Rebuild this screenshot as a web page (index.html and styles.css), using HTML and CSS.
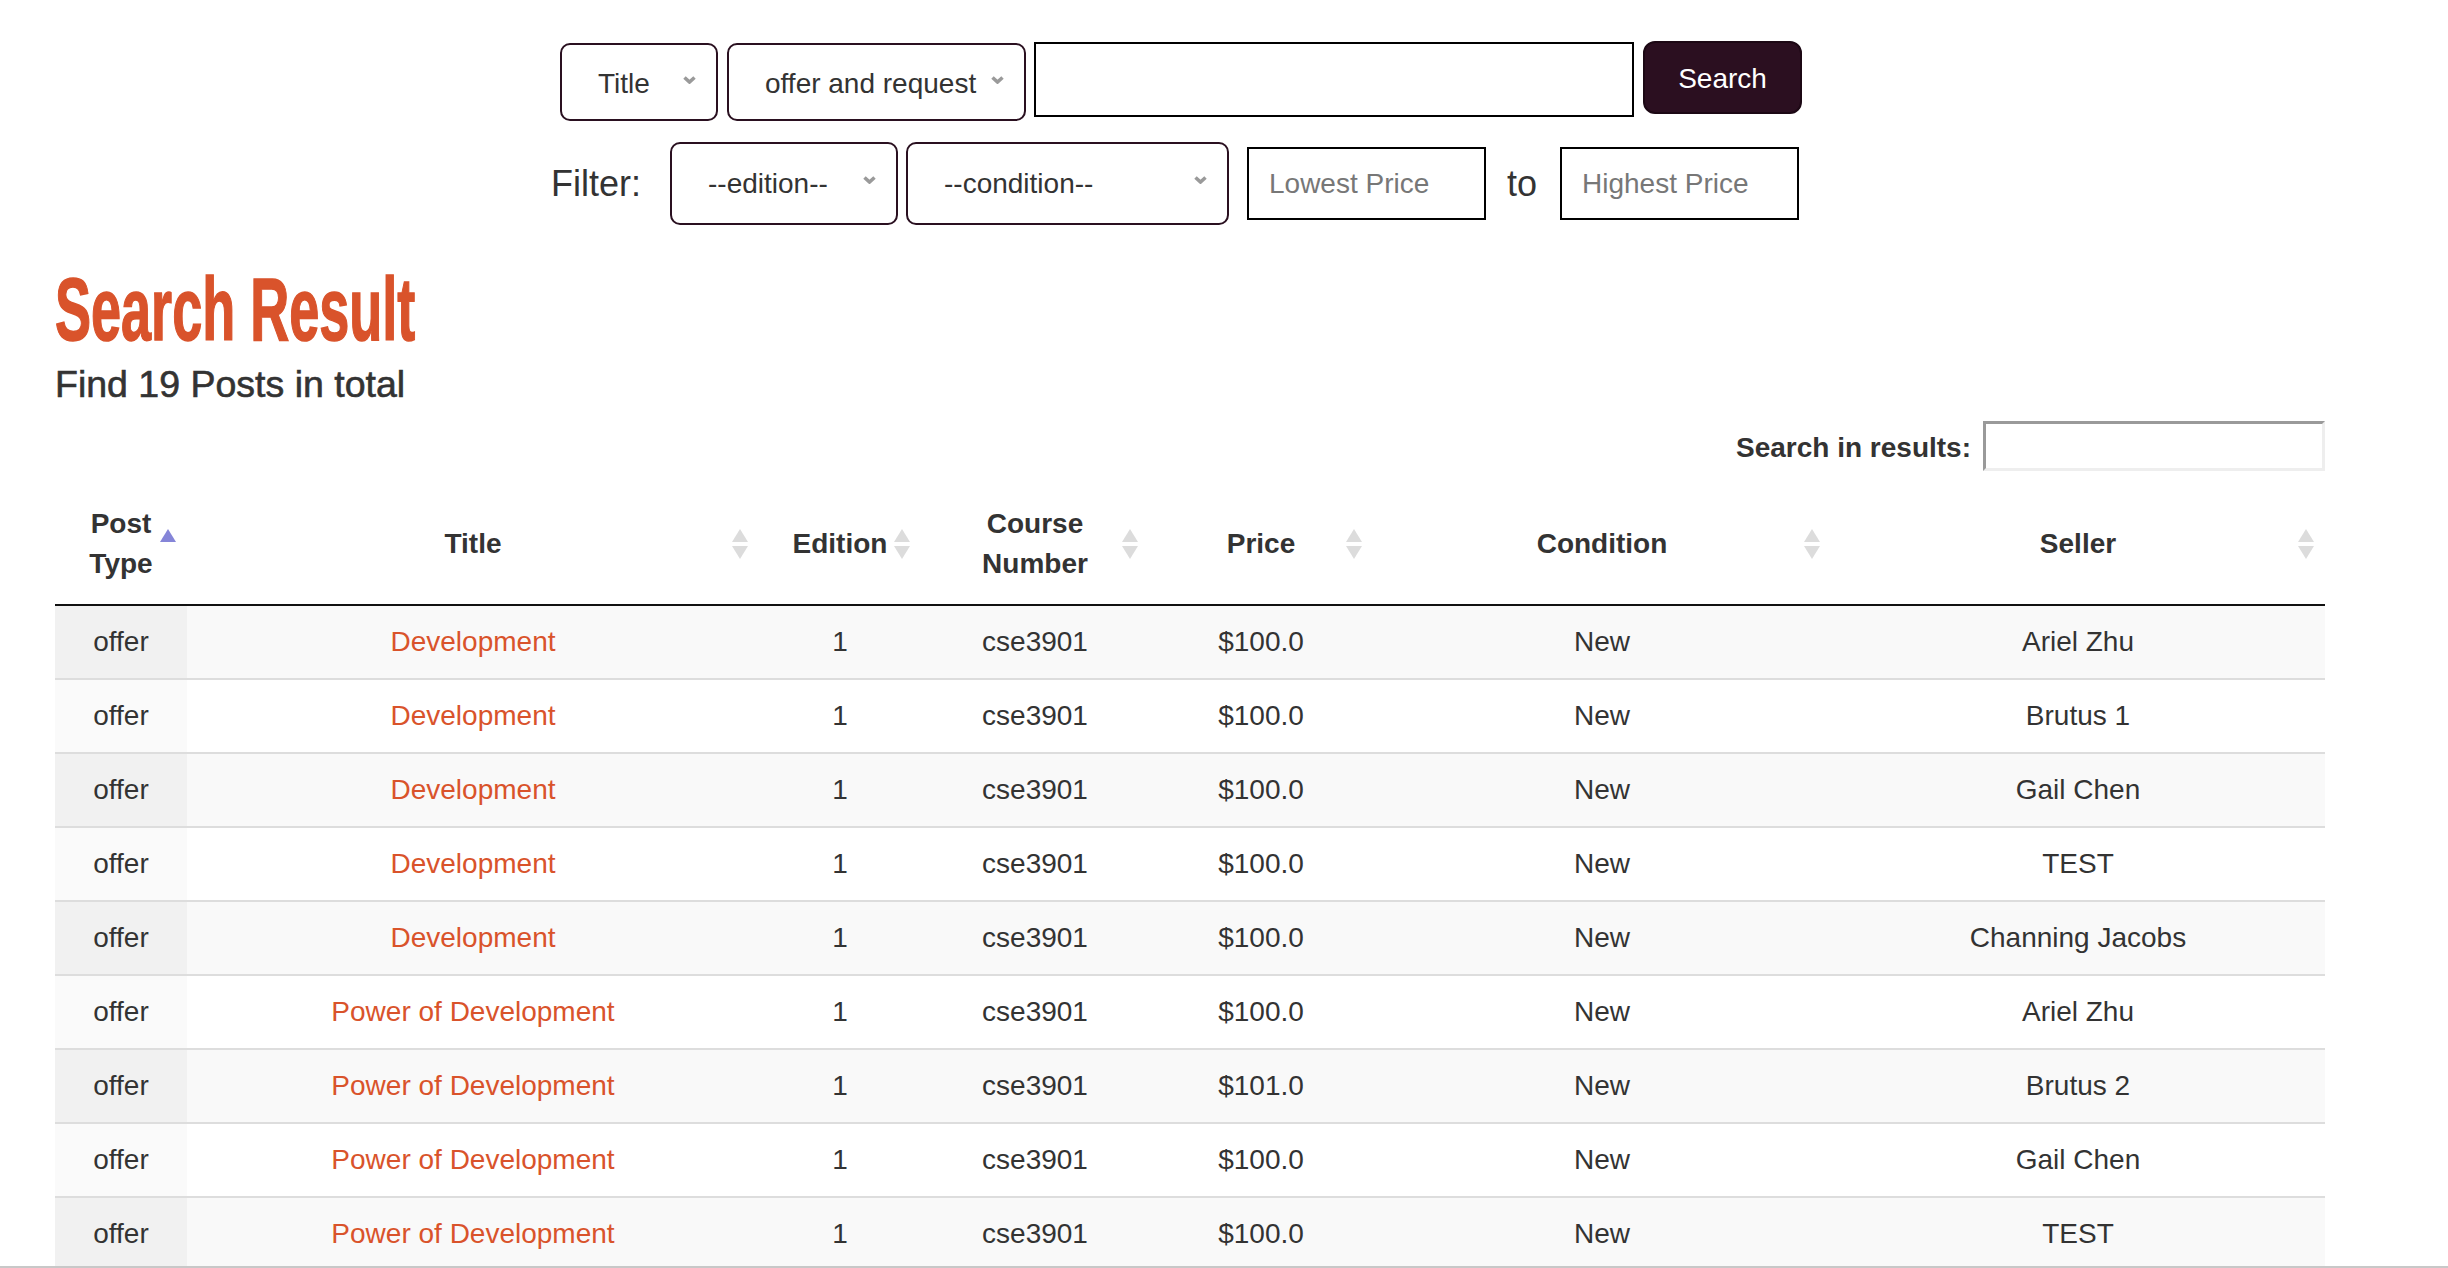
FILE: index.html
```html
<!DOCTYPE html>
<html lang="en">
<head>
<meta charset="utf-8">
<title>Search Result</title>
<link rel="stylesheet" href="styles.css">
</head>
<body>
<form class="top-form">
  <div class="form-row form-row-main">
    <div class="select select-field"><span>Title</span><svg class="chev" viewBox="0 0 13 8"><polyline points="1.5,1.5 6.5,6 11.5,1.5"/></svg></div>
    <div class="select select-type"><span>offer and request</span><svg class="chev" viewBox="0 0 13 8"><polyline points="1.5,1.5 6.5,6 11.5,1.5"/></svg></div>
    <input class="text-input main-input" type="text">
    <button class="search-btn" type="button">Search</button>
  </div>
  <div class="form-row form-row-filter">
    <span class="filter-label">Filter:</span>
    <div class="select select-edition"><span>--edition--</span><svg class="chev" viewBox="0 0 13 8"><polyline points="1.5,1.5 6.5,6 11.5,1.5"/></svg></div>
    <div class="select select-condition"><span>--condition--</span><svg class="chev" viewBox="0 0 13 8"><polyline points="1.5,1.5 6.5,6 11.5,1.5"/></svg></div>
    <input class="text-input price-input price-low" type="text" placeholder="Lowest Price">
    <span class="to-label">to</span>
    <input class="text-input price-input price-high" type="text" placeholder="Highest Price">
  </div>
</form>

<section class="results">
  <h1 class="results-title">Search Result</h1>
  <h4 class="results-count">Find 19 Posts in total</h4>

  <div class="dt-filter">
    <label class="dt-filter-label">Search in results:</label>
    <input class="dt-filter-input" type="search">
  </div>

  <table class="dt">
    <colgroup>
      <col class="c-type"><col class="c-title"><col class="c-edition"><col class="c-course"><col class="c-price"><col class="c-cond"><col class="c-seller">
    </colgroup>
    <thead>
      <tr>
        <th>Post Type<span class="sort sort-asc"></span></th>
        <th>Title<span class="sort"></span></th>
        <th>Edition<span class="sort"></span></th>
        <th>Course Number<span class="sort"></span></th>
        <th>Price<span class="sort"></span></th>
        <th>Condition<span class="sort"></span></th>
        <th>Seller<span class="sort"></span></th>
      </tr>
    </thead>
    <tbody>
      <tr><td class="sorted">offer</td><td><a href="#">Development</a></td><td>1</td><td>cse3901</td><td>$100.0</td><td>New</td><td>Ariel Zhu</td></tr>
      <tr><td class="sorted">offer</td><td><a href="#">Development</a></td><td>1</td><td>cse3901</td><td>$100.0</td><td>New</td><td>Brutus 1</td></tr>
      <tr><td class="sorted">offer</td><td><a href="#">Development</a></td><td>1</td><td>cse3901</td><td>$100.0</td><td>New</td><td>Gail Chen</td></tr>
      <tr><td class="sorted">offer</td><td><a href="#">Development</a></td><td>1</td><td>cse3901</td><td>$100.0</td><td>New</td><td>TEST</td></tr>
      <tr><td class="sorted">offer</td><td><a href="#">Development</a></td><td>1</td><td>cse3901</td><td>$100.0</td><td>New</td><td>Channing Jacobs</td></tr>
      <tr><td class="sorted">offer</td><td><a href="#">Power of Development</a></td><td>1</td><td>cse3901</td><td>$100.0</td><td>New</td><td>Ariel Zhu</td></tr>
      <tr><td class="sorted">offer</td><td><a href="#">Power of Development</a></td><td>1</td><td>cse3901</td><td>$101.0</td><td>New</td><td>Brutus 2</td></tr>
      <tr><td class="sorted">offer</td><td><a href="#">Power of Development</a></td><td>1</td><td>cse3901</td><td>$100.0</td><td>New</td><td>Gail Chen</td></tr>
      <tr><td class="sorted">offer</td><td><a href="#">Power of Development</a></td><td>1</td><td>cse3901</td><td>$100.0</td><td>New</td><td>TEST</td></tr>
    </tbody>
  </table>
</section>
<div class="viewport-edge"></div>
</body>
</html>
```

FILE: styles.css
```css
html, body {
  background: #fff;
}
body {
  margin: 0;
  font-family: "Liberation Sans", Arial, Helvetica, sans-serif;
  font-size: 28px;
  color: #333;
}

/* ---------- top search form ---------- */
.top-form {
  padding-top: 41px;
}
.form-row {
  display: flex;
}
.form-row-main {
  margin-left: 560px;
  align-items: flex-start;
  height: 80px;
}
.form-row-filter {
  margin-left: 551px;
  margin-top: 21px;
  align-items: center;
  height: 83px;
}

.select {
  box-sizing: border-box;
  display: flex;
  align-items: center;
  border: 2px solid #2a1020;
  border-radius: 10px;
  padding: 0 20px 0 36px;
  background: #fff;
  color: #333;
  line-height: 40px;
  white-space: nowrap;
}
.select .chev {
  margin-left: auto;
  width: 13px;
  height: 8px;
  margin-top: -8px;
  flex: none;
}
.select .chev polyline {
  fill: none;
  stroke: #9a9a9a;
  stroke-width: 3.6;
  stroke-linecap: butt;
  stroke-linejoin: miter;
}
.select-field {
  width: 158px;
  height: 78px;
  margin-top: 2px;
  padding-top: 4px;
}
.select-type {
  width: 299px;
  height: 78px;
  margin-top: 2px;
  margin-left: 9px;
  padding-top: 4px;
}
.select-edition {
  width: 228px;
  height: 83px;
  margin-left: 29px;
}
.select-condition {
  width: 323px;
  height: 83px;
  margin-left: 8px;
}

.text-input {
  box-sizing: border-box;
  border: 2px solid #000;
  border-radius: 0;
  background: #fff;
  font-family: inherit;
  font-size: 28px;
  color: #333;
  outline: none;
  margin: 0;
}
.text-input::placeholder {
  color: #777;
}
.main-input {
  width: 600px;
  height: 75px;
  margin-top: 1px;
  margin-left: 8px;
}
.price-input {
  width: 239px;
  height: 73px;
  padding: 0 20px;
}
.price-low {
  margin-left: 18px;
}
.price-high {
  margin-left: 23px;
}

.search-btn {
  box-sizing: border-box;
  width: 159px;
  height: 73px;
  margin-left: 9px;
  border: 2px solid #1c0814;
  border-radius: 12px;
  background: #2b0f20;
  color: #fff;
  font-family: inherit;
  font-size: 28px;
  padding: 3px 0 0;
}

.filter-label,
.to-label {
  font-size: 36px;
  line-height: 40px;
  color: #333;
}
.to-label {
  margin-left: 21px;
}

/* ---------- results ---------- */
.results {
  width: 2270px;
  margin-left: 55px;
}
.results-title {
  margin: 40px 0 0;
  font-size: 89px;
  line-height: 89px;
  font-weight: bold;
  color: #d9532b;
  -webkit-text-stroke: 1.5px #d9532b;
  transform: scaleX(0.607);
  transform-origin: left center;
  white-space: nowrap;
}
.results-count {
  margin: 9px 0 0;
  font-size: 37.5px;
  line-height: 42px;
  font-weight: normal;
  color: #333;
  -webkit-text-stroke: 0.6px #333;
}

.dt-filter {
  display: flex;
  justify-content: flex-end;
  align-items: center;
  margin-top: 16px;
  height: 50px;
}
.dt-filter-label {
  font-weight: bold;
  line-height: 40px;
  margin-right: 12px;
  padding-top: 3px;
}
.dt-filter-input {
  box-sizing: border-box;
  width: 342px;
  height: 50px;
  margin: 0;
  border-style: solid;
  border-width: 3px;
  border-color: #9a9a9a #eeeeee #eeeeee #9a9a9a;
  background: #fff;
  font-family: inherit;
  font-size: 28px;
  outline: none;
}

.dt {
  margin-top: 13px;
  width: 2270px;
  table-layout: fixed;
  border-collapse: separate;
  border-spacing: 0;
}
.c-type { width: 132px; }
.c-title { width: 572px; }
.c-edition { width: 162px; }
.c-course { width: 228px; }
.c-price { width: 224px; }
.c-cond { width: 458px; }
.c-seller { width: 494px; }

.dt th {
  position: relative;
  padding: 20px;
  line-height: 40px;
  font-weight: bold;
  text-align: center;
  vertical-align: middle;
  color: #333;
  border-bottom: 2px solid #111;
}
.dt td {
  padding: 16px 20px;
  line-height: 40px;
  text-align: center;
  vertical-align: middle;
  color: #333;
  border-top: 2px solid #ddd;
  white-space: nowrap;
}
.dt tbody tr:first-child td {
  border-top: none;
}
.dt tbody tr:nth-child(odd) td {
  background: #f9f9f9;
}
.dt tbody tr:nth-child(odd) td.sorted {
  background: #f1f1f1;
}
.dt tbody tr:nth-child(even) td.sorted {
  background: #fafafa;
}
.dt a {
  color: #d9532b;
  text-decoration: none;
}

.sort {
  position: absolute;
  right: 11px;
  top: 50%;
  width: 16px;
  height: 30px;
  margin-top: -15px;
}
.sort::before,
.sort::after {
  content: "";
  position: absolute;
  left: 0;
  width: 0;
  height: 0;
  border-left: 8px solid transparent;
  border-right: 8px solid transparent;
}
.sort::before {
  top: 0;
  border-bottom: 13px solid #dcdcdc;
}
.sort::after {
  bottom: 0;
  border-top: 13px solid #dcdcdc;
}
.sort-asc::before {
  border-bottom-color: #8585d8;
}
.sort-asc::after {
  display: none;
}

.viewport-edge {
  position: fixed;
  left: 0;
  right: 0;
  bottom: 0;
  height: 2px;
  background: #c8c8c8;
}
```
